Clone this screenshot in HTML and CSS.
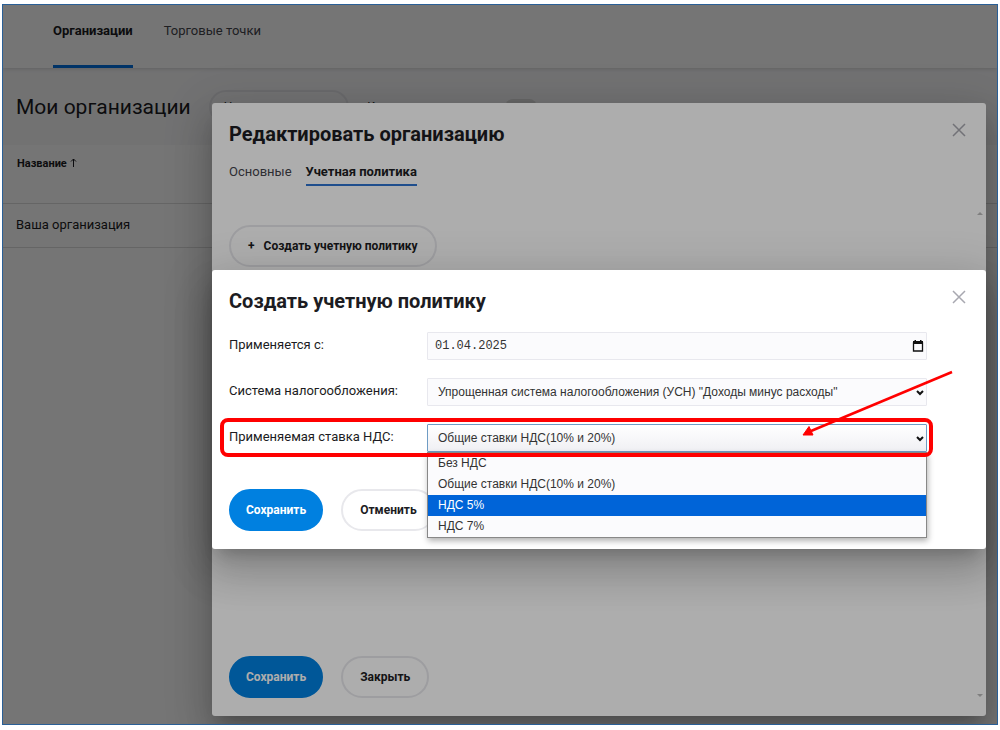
FILE: index.html
```html
<!DOCTYPE html>
<html lang="ru">
<head>
    <meta charset="UTF-8">
    <meta name="viewport" content="width=device-width, initial-scale=1.0">
    <title>Мои организации</title>
    <link rel="stylesheet" href="styles.css">
</head>
<body>
    <div class="frame">
        <header class="header">
            <nav class="nav">
                <a href="#" class="nav-link active">Организации</a>
                <a href="#" class="nav-link">Торговые точки</a>
            </nav>
        </header>

        <main>
            <div class="toolbar">
                <h1>Мои организации</h1>
                <button type="button" class="btn btn-new">Новая организация</button>
                <span class="trash">Корзина</span>
                <span class="switch"></span>
            </div>
            <table class="orgs">
                <thead>
                    <tr>
                        <th>Название <svg width="7" height="9" viewBox="0 0 7 9"><path d="M3.500 9V1M1 3.500L3.500 1 6 3.500"/></svg></th>
                    </tr>
                </thead>
                <tbody>
                    <tr><td>Ваша организация</td></tr>
                </tbody>
            </table>
        </main>

        <!-- Редактирование организации -->
        <div class="overlay">
            <section class="dialog dialog-edit">
                <div class="dialog-head">
                    <h2>Редактировать организацию</h2>
                    <button type="button" class="close" aria-label="Закрыть окно">
                        <svg width="14" height="14" viewBox="0 0 14 14"><path d="M1 1l12 12M13 1L1 13"/></svg>
                    </button>
                </div>
                <nav class="tabs">
                    <a href="#" class="tab">Основные</a>
                    <a href="#" class="tab active">Учетная политика</a>
                </nav>
                <div class="dialog-body">
                    <div class="dialog-content">
                        <button type="button" class="btn btn-add"><span>+</span>Создать учетную политику</button>
                        <div class="actions">
                            <button type="button" class="btn btn-primary">Сохранить</button>
                            <button type="button" class="btn">Закрыть</button>
                        </div>
                    </div>
                    <div class="scroll">
                        <svg width="6" height="4" viewBox="0 0 6 4"><path d="M0 3l3-3 3 3z"/></svg>
                        <svg width="6" height="4" viewBox="0 0 6 4"><path d="M0 0h6L3 3z"/></svg>
                    </div>
                </div>
            </section>
        </div>

        <!-- Создание учетной политики -->
        <div class="overlay overlay-top">
            <form class="dialog dialog-create">
                <div class="dialog-head">
                    <h2>Создать учетную политику</h2>
                    <button type="button" class="close" aria-label="Закрыть окно">
                        <svg width="14" height="14" viewBox="0 0 14 14"><path d="M1 1l12 12M13 1L1 13"/></svg>
                    </button>
                </div>
                <div class="fields">
                    <div class="row">
                        <label for="date">Применяется с:</label>
                        <div class="field">
                            <input type="text" id="date" class="control date" value="01.04.2025">
                            <svg class="field-icon" width="12" height="12" viewBox="0 0 12 12"><path d="M1.500 3v8h9V3z" fill="none" stroke="#111" stroke-width="1.300"/><path d="M1 1h1.500V0H4v1h4V0h1.500v1H11v3H1z" fill="#111"/></svg>
                        </div>
                    </div>
                    <div class="row">
                        <label for="system">Система налогообложения:</label>
                        <div class="field">
                            <select id="system" class="control">
                                <option>Упрощенная система налогообложения (УСН) "Доходы минус расходы"</option>
                            </select>
                            <svg class="field-icon arrow-down" width="8" height="6" viewBox="0 0 8 6"><path d="M1 1l3 3 3-3"/></svg>
                        </div>
                    </div>
                    <div class="row marked">
                        <label for="rate">Применяемая ставка НДС:</label>
                        <div class="field">
                            <select id="rate" class="control open">
                                <option>Общие ставки НДС(10% и 20%)</option>
                            </select>
                            <svg class="field-icon arrow-down" width="8" height="6" viewBox="0 0 8 6"><path d="M1 1l3 3 3-3"/></svg>
                            <ul class="options">
                                <li>Без НДС</li>
                                <li>Общие ставки НДС(10% и 20%)</li>
                                <li class="selected">НДС 5%</li>
                                <li>НДС 7%</li>
                            </ul>
                        </div>
                    </div>
                </div>
                <div class="actions">
                    <button type="button" class="btn btn-primary">Сохранить</button>
                    <button type="button" class="btn">Отменить</button>
                </div>
                <svg class="pointer" width="154" height="70" viewBox="0 0 154 70">
                    <path d="M151 2L10 61" fill="none" stroke="#f00" stroke-width="2.500"/>
                    <path d="M2 65l6-8.500 4 8.500z" fill="#f00" stroke="#f00"/>
                </svg>
            </form>
        </div>
    </div>
</body>
</html>
```
FILE: styles.css
```css
* {
    box-sizing: border-box;
}
body {
    margin: 0;
    padding: 4px 2px 5px 2px;
    background: #fff;
    font-family: Roboto, sans-serif;
    font-size: 13px;
    line-height: 20px;
    color: #1c1c22;
}
h1, h2 {
    margin: 0;
}
a {
    color: inherit;
    text-decoration: none;
}
.frame {
    position: relative;
    min-height: calc(100vh - 9px);
    border: 1px solid #2a5f96;
    overflow: hidden;
}

/* Шапка и список организаций */
.header {
    position: relative;
    height: 63px;
    padding-left: 50px;
    box-shadow: 0 1px 4px rgba(0,0,0,0.15);
}
.nav {
    display: flex;
    gap: 31px;
    height: 100%;
}
.nav-link {
    padding-top: 16px;
    border-bottom: 3px solid transparent;
    color: #44444c;
}
.nav-link.active {
    font-weight: bold;
    color: #1c1c22;
    border-color: #0071e0;
}
.toolbar {
    display: flex;
    align-items: center;
    gap: 18px;
    height: 77px;
    padding-left: 13px;
    background: #f8f8fa;
}
h1 {
    font-size: 21px;
    font-weight: normal;
}
.trash {
    font-size: 12px;
}
.switch {
    width: 32px;
    height: 16px;
    margin-left: 72px;
    border-radius: 8px;
    background: #ddd;
}
.orgs {
    width: 100%;
    border-collapse: collapse;
    text-align: left;
}
.orgs th {
    height: 58px;
    padding: 9px 14px;
    font-size: 11px;
    vertical-align: top;
    border-bottom: 1px solid #ddd;
}
.orgs th svg {
    fill: none;
    stroke: #1c1c22;
}
.orgs td {
    height: 44px;
    padding: 0 13px;
    border-bottom: 1px solid #ddd;
}

/* Окна */
.overlay {
    position: absolute;
    inset: 0;
    display: flex;
    padding: 98px 11px 8px 209px;
    background: rgba(0,0,0,0.32);
}
.overlay-top {
    align-items: flex-start;
    padding-top: 265px;
}
.dialog {
    position: relative;
    flex: 1;
    padding: 17px 17px 18px;
    border-radius: 3px;
    background: #fff;
    box-shadow: 0 11px 15px -7px rgba(0,0,0,0.2), 0 24px 38px 3px rgba(0,0,0,0.14), 0 9px 46px 8px rgba(0,0,0,0.12);
}
.dialog-edit {
    display: flex;
    flex-direction: column;
}
.dialog-head {
    display: flex;
    justify-content: space-between;
    align-items: flex-start;
    height: 28px;
}
h2 {
    font-size: 20px;
    line-height: 28px;
}
.close {
    display: flex;
    padding: 3px;
    border: 0;
    background: none;
}
.close path {
    fill: none;
    stroke: #a8a8b0;
    stroke-width: 1.5;
}
.tabs {
    display: flex;
    gap: 14px;
    margin-top: 14px;
}
.tab {
    padding-bottom: 2px;
    border-bottom: 2px solid transparent;
    color: #44444c;
}
.tab.active {
    font-weight: bold;
    color: #1c1c22;
    border-color: #2f74d0;
}
.dialog-body {
    flex: 1;
    display: flex;
    justify-content: space-between;
    margin: 26px -14px 0 0;
}
.dialog-content {
    display: flex;
    flex-direction: column;
    justify-content: space-between;
    align-items: flex-start;
    padding-top: 13px;
}
.scroll {
    display: flex;
    flex-direction: column;
    justify-content: space-between;
    fill: #bbb;
}
.btn {
    height: 42px;
    padding: 0 17px;
    border: 2px solid #e8e8ec;
    border-radius: 21px;
    background: none;
    font: bold 12px/20px Roboto, sans-serif;
    color: #1c1c22;
}
.btn-primary {
    padding: 0 15px;
    border-color: #0080e0;
    background: #0080e0;
    color: #fff;
}
.btn-new {
    height: 34px;
    padding: 0 13px;
    font-weight: normal;
}
.btn-add span {
    margin-right: 9px;
}
.actions {
    display: flex;
    gap: 18px;
}

/* Форма */
.fields {
    display: flex;
    flex-direction: column;
    gap: 18px;
    margin: 17px 42px 37px 0;
}
.row {
    position: relative;
    display: flex;
}
.row label {
    width: 198px;
    padding-top: 3px;
}
.field {
    position: relative;
    flex: 1;
}
.control {
    display: block;
    width: 100%;
    height: 28px;
    padding: 0 10px;
    border: 1px solid #e8e8ee;
    border-radius: 1px;
    background: #fbfbfd;
    font: 12px "Liberation Sans", Arial, sans-serif;
    color: #333;
    appearance: none;
}
.date {
    padding: 0 7px;
    font-family: "Liberation Mono", monospace;
}
.control.open {
    border-color: #6f9cc4;
    background: linear-gradient(#fff, #f0f0f4);
}
.field-icon {
    position: absolute;
    top: 8px;
    right: 3px;
}
.arrow-down {
    top: 12px;
}
.arrow-down path {
    fill: none;
    stroke: #111;
    stroke-width: 2;
}
.options {
    position: absolute;
    z-index: 1;
    top: 28px;
    left: 0;
    right: 0;
    margin: 0;
    padding: 0;
    list-style: none;
    border: 1px solid #888;
    background: #fbfbfd;
    box-shadow: 1px 3px 6px rgba(0,0,0,0.3);
    font: 12px/21px "Liberation Sans", Arial, sans-serif;
    color: #333;
}
.options li {
    padding: 0 10px;
}
.options .selected {
    background: #0064d8;
    color: #fff;
}

/* Красная рамка и стрелка */
.marked::after {
    content: "";
    position: absolute;
    z-index: 2;
    inset: -6px -6px -5px -9px;
    border: 4px solid #f00;
    border-radius: 8px;
    pointer-events: none;
}
.pointer {
    position: absolute;
    z-index: 3;
    top: 100px;
    right: 31px;
    pointer-events: none;
}
```
